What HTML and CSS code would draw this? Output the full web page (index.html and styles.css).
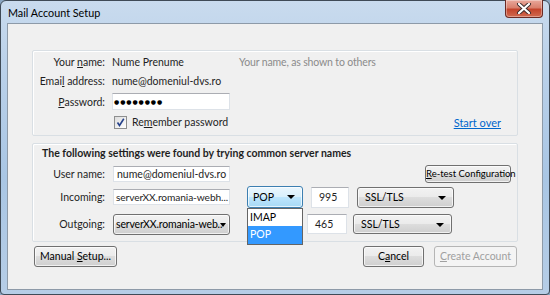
FILE: index.html
```html
<!DOCTYPE html>
<html>
<head>
<meta charset="utf-8">
<link rel="stylesheet" href="styles.css">
</head>
<body>
<div class="window">
  <div class="titlebar">
    <span class="title">Mail Account Setup</span>
    <div class="close">
      <svg width="16" height="11" viewBox="0 0 16 11"><path d="M3 1 L13 10 M13 1 L3 10" stroke="#3b2b2b" stroke-width="4" stroke-linecap="round"/><path d="M3 1 L13 10 M13 1 L3 10" stroke="#fff" stroke-width="2.2" stroke-linecap="round"/></svg>
    </div>
  </div>
  <div class="client">
    <section class="group g1">
      <div class="lbl">Your <u>n</u>ame:</div>
      <div class="val">Nume Prenume</div>
      <div class="hint">Your name, as shown to others</div>

      <div class="lbl">Emai<u>l</u> address:</div>
      <div class="val">nume@domeniul-dvs.ro</div>
      <div></div>

      <div class="lbl"><u>P</u>assword:</div>
      <div class="val"><div class="input pw">●●●●●●●●</div></div>
      <div></div>

      <div></div>
      <div class="val check">
        <span class="cb"><svg width="11" height="11" viewBox="0 0 11 11"><path d="M2.5 5.5 L4.5 8.5 L8.8 1.8" fill="none" stroke="#26428b" stroke-width="1.6"/></svg></span>
        <span>Re<u>m</u>ember password</span>
      </div>
      <div class="startover">Start over</div>
    </section>

    <section class="group g2">
      <div class="heading">The following settings were found by trying common server names</div>
      <div class="row r-user">
        <div class="lbl2">User name:</div>
        <div class="input w117">nume@domeniul-dvs.ro</div>
        <div class="btn retest"><u>R</u>e-test Configuration</div>
      </div>
      <div class="row r-in">
        <div class="lbl2">Incoming:</div>
        <div class="input w117 srv">serverXX.romania-webh...</div>
        <div class="menuwrap">
          <div class="select hot proto">POP<span class="arrow"></span></div>
          <div class="menu">
            <div class="item">IMAP</div>
            <div class="item sel">POP</div>
          </div>
        </div>
        <div class="input port p1">995</div>
        <div class="select ssl s1">SSL/TLS<span class="arrow"></span></div>
      </div>
      <div class="row r-out">
        <div class="lbl2">Outgoing:</div>
        <div class="select w117 outsel">serverXX.romania-web..<span class="arrow"></span></div>
        <div class="input port p2">465</div>
        <div class="select ssl s2">SSL/TLS<span class="arrow"></span></div>
      </div>
    </section>

    <div class="footer">
      <div class="btn manual">Manual <u>S</u>etup...</div>
      <div class="spacer"></div>
      <div class="btn cancel">C<u>a</u>ncel</div>
      <div class="btn create disabled"><u>C</u>reate Account</div>
    </div>
  </div>
</div>
</body>
</html>
```

FILE: styles.css
```css
* { box-sizing: border-box; }
html, body { margin: 0; padding: 0; }
body {
  width: 550px; height: 295px; overflow: hidden;
  font-family: "Lato", "Noto Sans", sans-serif;
  font-size: 10.5px; color: #1e1e1e;
  background: #8aa6c2;
}
u { text-decoration: underline; text-underline-offset: 1px; }
.window {
  width: 550px; height: 295px;
  border: 1px solid #3f4a56;
  border-radius: 6px 6px 4px 4px;
  background: linear-gradient(180deg, #c9dbee 0%, #bcd2ea 20%, #a9c6e4 60%, #b6cde6 100%);
  display: flex; flex-direction: column;
  padding: 0 6px 4px 6px;
}
.titlebar {
  height: 22px; display: flex; align-items: flex-start; position: relative;
}
.title { margin-top: 4px; margin-left: 1px; color: #000; font-size: 10.8px; line-height: 16px; }
.close {
  margin-left: auto; margin-right: 0px; margin-top: -1px;
  width: 38px; height: 18px;
  border: 1px solid #6b2a24; border-top: none;
  border-radius: 0 0 4px 4px;
  background: linear-gradient(180deg, #e9a99c 0%, #d9806d 45%, #c4442c 55%, #d06a50 100%);
  display: flex; align-items: center; justify-content: center;
  box-shadow: inset 0 0 0 1px rgba(255,255,255,0.35);
}
.client {
  flex: 1;
  background: #f0f0f0;
  border: 1px solid #8d9aa8;
  padding: 26px 24px 0 24px;
  display: flex; flex-direction: column;
}
.group {
  border: 1px solid #d9dfe4;
  border-radius: 2px;
  background: #f0f0f0;
  box-shadow: inset 1px 1px 0 #fff;
}
.g1 {
  height: 86px;
  display: grid;
  grid-template-columns: 72px 120px 1fr;
  grid-template-rows: 20px 18px 23px 18px;
  column-gap: 7px;
  padding: 1px 16px 0 0;
  align-items: center;
}
.lbl { text-align: right; white-space: nowrap; }
.val { white-space: nowrap; }
.hint { color: #8b8b8b; white-space: nowrap; letter-spacing: -0.15px; }
.input {
  background: #fff;
  border: 1px solid #dde2e8;
  border-top-color: #abadb3;
  height: 17px; line-height: 15px;
  padding: 0 4px;
  white-space: nowrap; overflow: hidden;
}
.pw { width: 118px; font-family: "DejaVu Sans", sans-serif; font-size: 6px; letter-spacing: 0.9px; color: #000; line-height: 15px; padding-left: 1px; }
.check { display: flex; align-items: center; gap: 5px; padding-left: 2px; }
.cb {
  width: 13px; height: 13px; border: 1px solid #8e8f8f;
  background: linear-gradient(135deg, #dcdcdc, #fff);
  display: flex; align-items: center; justify-content: center;
}
.startover { justify-self: end; color: #0066cc; text-decoration: underline; text-underline-offset: 1px; font-size: 11px; }

.g2 {
  margin-top: 7px;
  height: 99px;
  padding: 0 6px 0 0;
  display: flex; flex-direction: column;
}
.heading { font-weight: bold; height: 18px; line-height: 18px; padding-left: 9px; margin-top: 0px; white-space: nowrap; }
.row { display: flex; align-items: center; }
.lbl2 { width: 72px; text-align: right; margin-right: 8px; white-space: nowrap; }
.w117 { width: 117px; }
.r-user { height: 19px; margin-top: 2px; }
.r-in { height: 22px; margin-top: 3px; }
.r-out { height: 22px; margin-top: 5px; }
.r-user .input, .r-in .input.w117 { height: 16px; line-height: 14px; padding-left: 3px; }
.srv { padding-left: 2px !important; padding-right: 0; font-size: 10.2px; letter-spacing: -0.1px; }

.btn {
  height: 21px; line-height: 19px;
  border: 1px solid #707070; border-radius: 3px;
  background: linear-gradient(180deg, #f2f2f2 0%, #ebebeb 49%, #dddddd 50%, #cfcfcf 100%);
  box-shadow: inset 0 0 0 1px rgba(255,255,255,0.7);
  text-align: center; white-space: nowrap;
  color: #000;
}
.retest { margin-left: auto; width: 86px; height: 18px; line-height: 16px; font-size: 9.5px; }

.select {
  position: relative;
  height: 21px; line-height: 19px;
  border: 1px solid #707070; border-radius: 3px;
  background: linear-gradient(180deg, #f2f2f2 0%, #ebebeb 49%, #dddddd 50%, #cfcfcf 100%);
  box-shadow: inset 0 0 0 1px rgba(255,255,255,0.7);
  padding-left: 7px; white-space: nowrap; color: #000;
}
.arrow {
  position: absolute; right: 7px; top: 8px;
  width: 0; height: 0;
  border-left: 4px solid transparent; border-right: 4px solid transparent;
  border-top: 4px solid #000;
}
.outsel { padding-left: 2px; letter-spacing: -0.15px; }
.outsel .arrow { right: 3px; border-left-width: 3.5px; border-right-width: 3.5px; }
.menuwrap { position: relative; margin-left: 17px; }
.proto { width: 56px; height: 22px; line-height: 20px; padding-left: 5px; }
.hot {
  border-color: #3c7fb1;
  background: linear-gradient(180deg, #eaf6fd 0%, #d9f0fc 49%, #bee6fd 50%, #a7d9f5 100%);
}
.menu {
  position: absolute; left: 0; top: 22px; width: 56px;
  border: 1px solid #646464; background: #fff;
  z-index: 5;
}
.item { height: 17px; line-height: 17px; padding-left: 2px; color: #000; }
.item.sel { background: #3399ff; color: #fff; height: 18px; }
.port { width: 38px; height: 21px; line-height: 19px; padding-left: 7px; }
.p1 { margin-left: 8px; }
.ssl { width: 97px; margin-left: 8px; }
.ssl.s1 { padding-left: 7px; }
.p2 { margin-left: 77px; width: 40px; height: 20px; }
.s2 { margin-left: 6px; width: 99px; height: 20px; line-height: 18px; }

.footer { display: flex; margin-top: 4px; padding: 0 1px 0 2px; }
.spacer { flex: 1; }
.manual { width: 83px; }
.cancel { width: 61px; }
.create { width: 83px; margin-left: 10px; }
.disabled { color: #a0a0a0; border-color: #b5b5b5; background: #f4f4f4; box-shadow: none; }
```
